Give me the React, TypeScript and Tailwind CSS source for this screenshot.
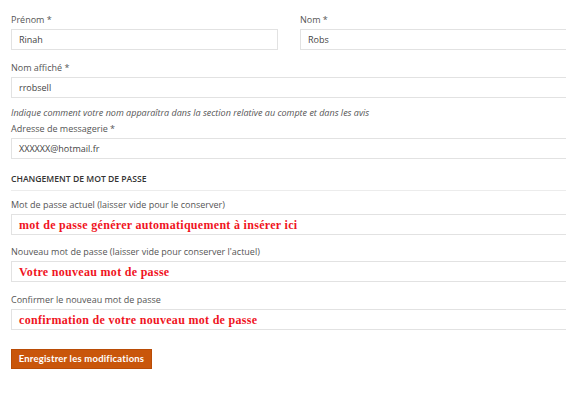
const sans = "font-['Open_Sans','Liberation_Sans',sans-serif]";

function Label({ children }: { children: React.ReactNode }) {
  return <div className={`${sans} text-[9px] leading-[12px] text-[#555]`}>{children}</div>;
}

function Field({ value, hint, className = "" }: { value?: string; hint?: string; className?: string }) {
  return (
    <div className={`mt-[3px] h-[21px] border border-[#e2e2e2] bg-white flex items-center px-[7px] ${className}`}>
      {value && <span className={`${sans} text-[9px] text-[#444]`}>{value}</span>}
      {hint && (
        <span className="font-['Liberation_Serif',serif] font-bold text-[12px] text-[#f0141e] tracking-[0.3px] pt-[1px]">
          {hint}
        </span>
      )}
    </div>
  );
}

export default function App() {
  return (
    <div className="w-[566px] h-[400px] overflow-hidden bg-white">
      <form className="w-[620px] pl-[11px] pt-[14px]">
        <div className="grid grid-cols-[267px_1fr] gap-x-[22px]">
          <div>
            <Label>Prénom *</Label>
            <Field value="Rinah" />
          </div>
          <div>
            <Label>Nom *</Label>
            <Field value="Robs" />
          </div>
        </div>

        <div className="mt-[12px]">
          <Label>Nom affiché *</Label>
          <Field value="rrobsell" />
        </div>
        <p className={`${sans} italic text-[9px] leading-[14px] text-[#555] mt-[8px]`}>
          Indique comment votre nom apparaîtra dans la section relative au compte et dans les avis
        </p>

        <div className="mt-[3px]">
          <Label>Adresse de messagerie *</Label>
          <Field value="XXXXXX@hotmail.fr" />
        </div>

        <div className="mt-[13px] border-b border-[#ececec] pb-[4px]">
          <h3 className={`${sans} font-semibold text-[8.6px] leading-[14px] text-[#333] uppercase`}>
            Changement de mot de passe
          </h3>
        </div>

        <div className="mt-[8px]">
          <Label>Mot de passe actuel (laisser vide pour le conserver)</Label>
          <Field hint="mot de passe générer automatiquement à insérer ici" />
        </div>
        <div className="mt-[11px]">
          <Label>Nouveau mot de passe (laisser vide pour conserver l'actuel)</Label>
          <Field hint="Votre nouveau mot de passe" />
        </div>
        <div className="mt-[12px]">
          <Label>Confirmer le nouveau mot de passe</Label>
          <Field hint="confirmation de votre nouveau mot de passe" />
        </div>

        <button
          type="button"
          className="mt-[19px] h-[20px] w-[141px] bg-[#c9560b] text-white font-['Lato',sans-serif] font-bold text-[9.5px] tracking-[0.2px] border border-[#b94c06]"
        >
          Enregistrer les modifications
        </button>
      </form>
    </div>
  );
}
